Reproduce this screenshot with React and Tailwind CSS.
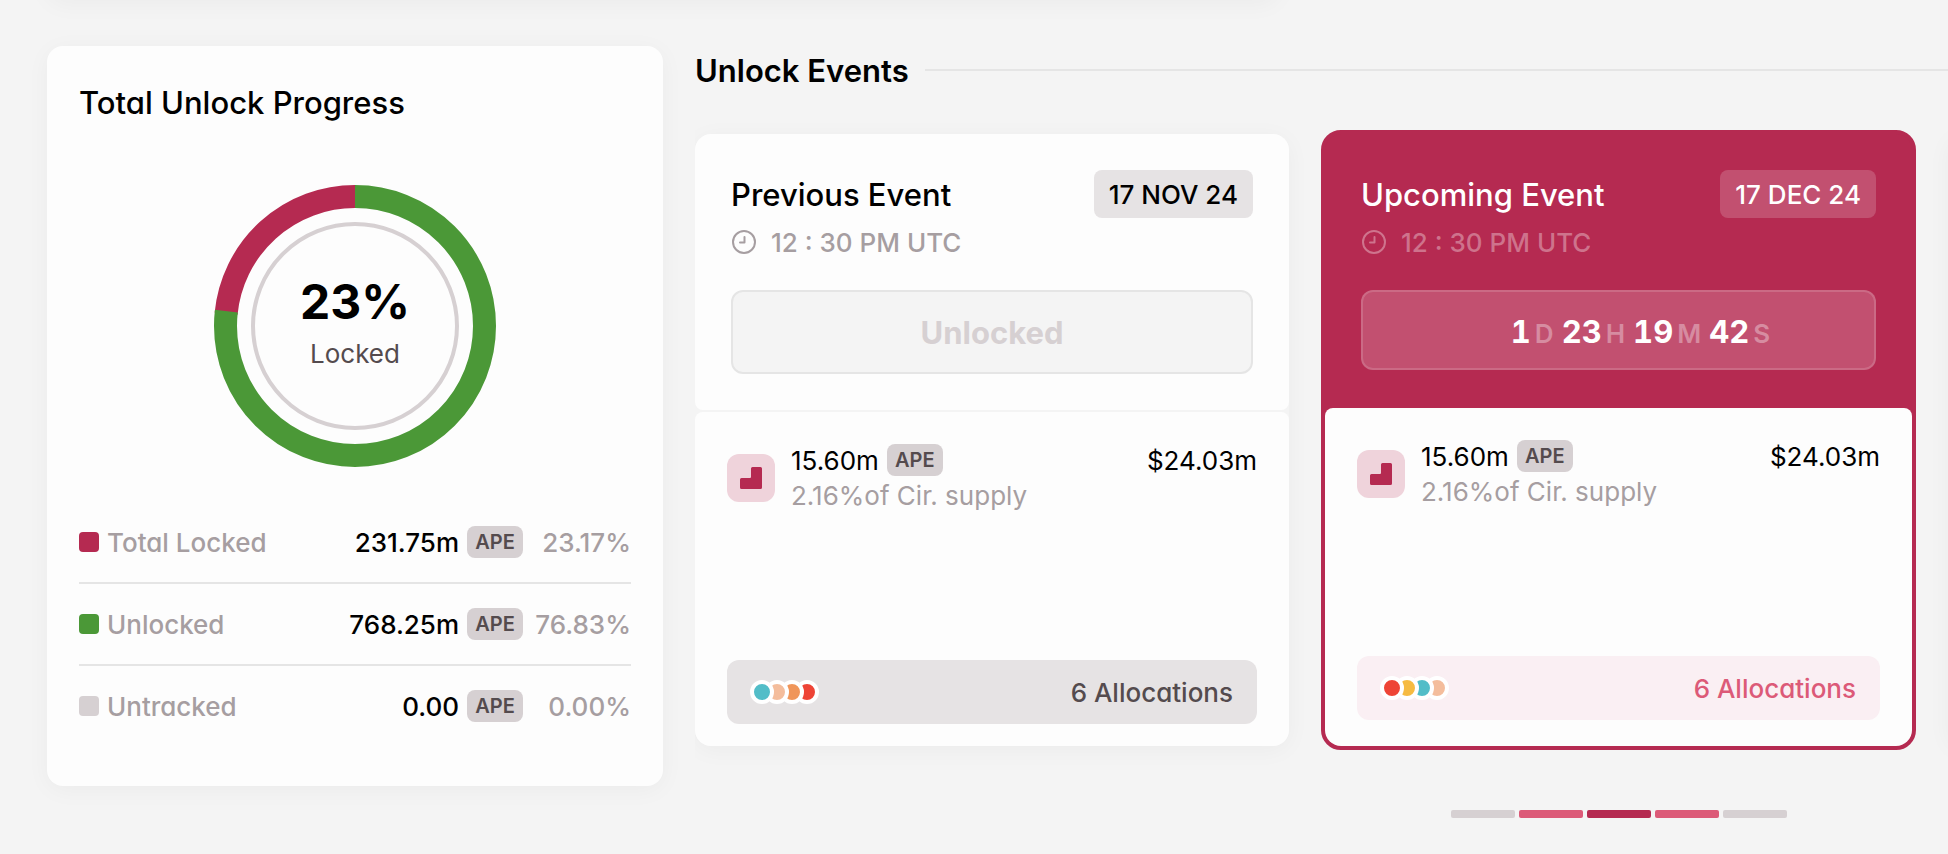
const APE = () => (
  <span className="flex h-8 w-14 items-center justify-center rounded-lg bg-[#d6d0d2] text-xl leading-6 font-semibold text-[#544b4e]">APE</span>
);

const rows = [
  { label: "Total Locked", amount: "231.75m", pct: "23.17%", color: "bg-[#b52a51]" },
  { label: "Unlocked", amount: "768.25m", pct: "76.83%", color: "bg-[#4b9837]" },
  { label: "Untracked", amount: "0.00", pct: "0.00%", color: "bg-[#d6d0d2]" },
];

function Donut() {
  const r = 129.5;
  const c = 2 * Math.PI * r;
  return (
    <div className="relative mx-auto size-[282px]">
      <svg viewBox="0 0 282 282" className="size-full" aria-hidden="true">
        <g transform="rotate(-90 141 141)" fill="none" strokeWidth="23">
          <circle cx="141" cy="141" r={r} stroke="#b52a51" strokeDasharray={`${c * 0.235} ${c}`} strokeDashoffset={-c * 0.765} />
          <circle cx="141" cy="141" r={r} stroke="#4b9837" strokeDasharray={`${c * 0.768} ${c}`} />
        </g>
        <circle cx="141" cy="141" r="102" fill="none" stroke="#d6d0d2" strokeWidth="4" />
      </svg>
      <div className="absolute inset-0 flex flex-col items-center pt-[89px]">
        <span className="text-5xl leading-[56px] font-bold text-black">23%</span>
        <span className="mt-2 text-[26px] leading-8 text-[#544b4e]">Locked</span>
      </div>
    </div>
  );
}

function ProgressCard() {
  return (
    <section className="w-[616px] shrink-0 self-start rounded-2xl bg-[#fdfdfd] px-8 pt-[37px] pb-10 shadow-[0_4px_24px_rgba(0,0,0,0.04)]">
      <h2 className="mb-[62px] text-[31px] leading-10 font-medium text-black">Total Unlock Progress</h2>
      <Donut />
      <ul className="mt-[35px] divide-y-2 divide-[#e5e5e5]">
        {rows.map((row) => (
          <li key={row.label} className="flex h-[82px] items-center text-[26px] leading-8 font-medium last:h-20">
            <span className={`size-5 rounded ${row.color}`} />
            <span className="ml-2 flex-1 pt-0.5 text-[#a69ea1]">{row.label}</span>
            <span className="mr-2 pt-0.5 text-black">{row.amount}</span>
            <APE />
            <span className="w-[108px] pt-0.5 text-right text-[#a69ea1]">{row.pct}</span>
          </li>
        ))}
      </ul>
    </section>
  );
}

function Clock() {
  return (
    <svg viewBox="0 0 24 24" className="size-6" fill="none" stroke="currentColor" strokeWidth="2" strokeLinecap="round" strokeLinejoin="round" aria-hidden="true">
      <circle cx="12" cy="12" r="11" />
      <path d="M12.5 7V12.5H8" />
    </svg>
  );
}

function Shares() {
  return (
    <span className="flex size-12 shrink-0 items-center justify-center rounded-xl bg-[#efd3db]">
      <svg viewBox="0 0 22 22" className="size-[22px]" aria-hidden="true">
        <path d="M12.5 0h8A1.5 1.5 0 0 1 22 1.5v19a1.5 1.5 0 0 1-1.5 1.5h-19A1.5 1.5 0 0 1 0 20.5v-8A1.5 1.5 0 0 1 1.500 11H10a1 1 0 0 0 1-1V1.500A1.500 1.500 0 0 1 12.500 0Z" fill="#b52a51" />
      </svg>
    </span>
  );
}

function Dots({ colors }) {
  return (
    <span className="flex">
      {colors.map((color, i) => (
        <span key={color} className="relative -ml-[9px] size-6 rounded-full border-4 border-white first:ml-0" style={{ backgroundColor: color, zIndex: colors.length - i }} />
      ))}
    </span>
  );
}

function Details({ colors, buttonClass }) {
  return (
    <>
      <div className="flex items-start">
        <div className="flex items-center gap-4">
          <Shares />
          <div className="text-[26px] leading-9">
            <div className="flex h-9 items-center gap-2 text-black">
              <span className="pt-0.5">15.60m</span>
              <APE />
            </div>
            <div className="text-[#a69ea1]">2.16%of Cir. supply</div>
          </div>
        </div>
        <span className="ml-auto pt-px text-[26px] leading-9 text-black">$24.03m</span>
      </div>
      <button type="button" className={`mt-auto flex h-16 w-full items-center justify-between rounded-xl pr-6 pl-[23px] text-[26px] leading-8 font-medium ${buttonClass}`}>
        <Dots colors={colors} />
        <span className="pt-0.5">6 Allocations</span>
      </button>
    </>
  );
}

function EventHead({ title, date, dateClass, timeClass }) {
  return (
    <>
      <div className="flex h-12 items-center justify-between">
        <h3 className="pt-0.5 text-[31px] leading-10 font-medium">{title}</h3>
        <span className={`flex h-12 items-center rounded-lg px-[15px] pt-0.5 text-[26px] leading-8 font-medium ${dateClass}`}>{date}</span>
      </div>
      <div className={`mt-2 flex items-center gap-[15px] px-px text-[26px] leading-8 font-medium ${timeClass}`}>
        <Clock />
        <span className="pt-0.5 leading-[30px]">12 : 30 PM UTC</span>
      </div>
    </>
  );
}

const countdown = [["1", "D"], ["23", "H"], ["19", "M"], ["42", "S"]];
const pages = ["bg-[#d6d0d2]", "bg-[#dc5a78]", "bg-[#b52a51]", "bg-[#dc5a78]", "bg-[#d6d0d2]"];

export default function App() {
  return (
    <main className="flex min-h-screen flex-col overflow-hidden bg-[#f4f4f4] pl-[47px] font-['Inter',sans-serif] [font-feature-settings:'cv11']">
      <div className="-mt-16 h-16 w-[1232px] shrink-0 rounded-2xl shadow-[0_4px_24px_rgba(0,0,0,0.04)]" />
      <div className="flex gap-8 pt-[46px]">
        <ProgressCard />
        <section className="min-w-0 flex-1">
          <div className="flex items-center gap-4 pt-1">
            <h2 className="pt-0.5 text-[31px] leading-[38px] font-semibold text-black">Unlock Events</h2>
            <div className="h-0.5 flex-1 bg-[#e5e5e5]" />
          </div>
          <div className="overflow-hidden pt-10">
            <div className="w-max">
              <div className="flex gap-8">
                <article className="my-1 flex w-[594px] flex-col gap-0.5 rounded-2xl bg-[#f4f4f4] shadow-[0_4px_24px_rgba(0,0,0,0.04)]">
                  <div className="rounded-t-2xl rounded-b-lg bg-[#fdfdfd] p-9 text-black">
                    <EventHead title="Previous Event" date="17 NOV 24" dateClass="bg-[#e6e3e4]" timeClass="text-[#a69ea1]" />
                    <div className="mt-8 flex h-[84px] items-center justify-center rounded-xl border-2 border-[#e5e5e5] bg-[#f4f4f4] pt-0.5 text-[31px] leading-10 font-bold text-[#d6d0d2]">Unlocked</div>
                  </div>
                  <div className="flex h-[334px] flex-col rounded-t-lg rounded-b-2xl bg-[#fdfdfd] px-8 pt-[30px] pb-[22px]">
                    <Details colors={["#52bdc8", "#f4bd9c", "#f0965a", "#ee4436"]} buttonClass="bg-[#e6e3e4] text-[#544b4e]" />
                  </div>
                </article>
                <article className="w-[595px] rounded-[20px] border-4 border-[#b52a51] bg-[#b52a51]">
                  <div className="p-9 pb-[38px] text-white">
                    <EventHead title="Upcoming Event" date="17 DEC 24" dateClass="bg-white/18" timeClass="text-white/35" />
                    <div className="mt-8 flex h-20 items-center justify-center gap-2 rounded-xl border-2 border-white/15 bg-white/18 pt-1 pl-11">
                      {countdown.map(([value, unit]) => (
                        <span key={unit} className="flex items-baseline gap-1 text-[31px] leading-10 font-bold">
                          <span className="[font-feature-settings:'tnum']">{value}</span>
                          <span className="text-[26px] leading-8 font-semibold text-white/35">{unit}</span>
                        </span>
                      ))}
                    </div>
                  </div>
                  <div className="flex h-[338px] flex-col rounded-t-lg rounded-b-2xl bg-[#fdfdfd] px-8 pt-[30px] pb-[26px]">
                    <Details colors={["#ee4436", "#f6bb42", "#52bdc8", "#f4bd9c"]} buttonClass="bg-[#faeff3] text-[#dc5a78]" />
                  </div>
                </article>
                <article className="my-1 w-[594px] rounded-2xl bg-[#fdfdfd] shadow-[0_4px_24px_rgba(0,0,0,0.04)]" />
              </div>
              <nav aria-label="Unlock event pages" className="mt-[60px] flex justify-center gap-1">
                {pages.map((color, i) => (
                  <button key={i} type="button" aria-label={`Page ${i + 1}`} className={`h-2 w-16 rounded-xs ${color}`} />
                ))}
              </nav>
            </div>
          </div>
        </section>
      </div>
    </main>
  );
}
